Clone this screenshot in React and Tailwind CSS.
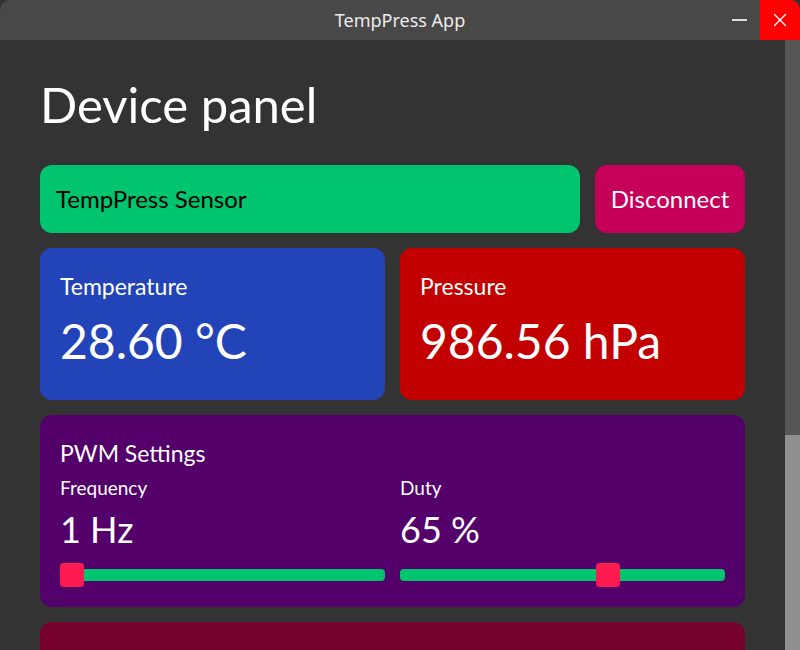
import { X } from 'lucide-react';

const FONT = "font-['Lato','Noto_Sans',sans-serif]";

function Slider({ percent }) {
  // track with a square-ish thumb; thumb travels across the inner width
  return (
    <div className="relative mt-[14px] h-6">
      <div className="absolute inset-x-0 top-[6px] h-[12px] rounded-[4px] bg-[#00c46e]" />
      <div
        className="absolute top-0 h-6 w-6 rounded-[4px] bg-[#ff1a50]"
        style={{ left: `calc((100% - 24px) * ${percent / 100})` }}
      />
    </div>
  );
}

function Field({ label, value, percent }) {
  return (
    <div className="flex flex-col">
      <span className="text-[19px] leading-[24px] text-white">{label}</span>
      <span className="mt-[9px] text-[36px] leading-[40px] text-white">{value}</span>
      <Slider percent={percent} />
    </div>
  );
}

export default function App() {
  return (
    <div className={`flex h-[650px] w-[800px] flex-col overflow-hidden bg-[#333333] ${FONT}`}>
      <div className="flex h-10 shrink-0 items-center rounded-t-[10px] bg-[#484848]">
        <div className="flex-1" />
        <span className="font-['Noto_Sans',sans-serif] text-[18px] text-[#ececec]">
          TempPress App
        </span>
        <div className="flex flex-1 items-center justify-end">
          <div className="mr-[13px] h-[1.5px] w-[15px] bg-[#dcdcdc]" />
          <div className="flex h-10 w-10 items-center justify-center rounded-tr-[10px] bg-[#ff0000]">
            <X className="h-[22px] w-[22px] text-white" strokeWidth={1.5} />
          </div>
        </div>
      </div>

      <div className="flex min-h-0 flex-1">
        <div className="flex-1 px-10">
          <h1 className="mt-[36px] text-[49px] leading-[56px] text-white">Device panel</h1>

          <div className="mt-[33px] flex gap-[15px]">
            <div className="flex h-[68px] flex-1 items-center rounded-xl bg-[#00c46e] px-4 text-[24px] text-black">
              TempPress Sensor
            </div>
            <div className="flex h-[68px] w-[150px] items-center justify-center rounded-xl bg-[#c6005a] text-[24px] text-white">
              Disconnect
            </div>
          </div>

          <div className="mt-[15px] grid grid-cols-2 gap-[15px]">
            <div className="h-[152px] rounded-xl bg-[#2244b8] px-5 pt-[24px] text-white">
              <div className="text-[23px] leading-[28px]">Temperature</div>
              <div className="mt-[14px] text-[48px] leading-[54px]">28.60 °C</div>
            </div>
            <div className="h-[152px] rounded-xl bg-[#c20000] px-5 pt-[24px] text-white">
              <div className="text-[23px] leading-[28px]">Pressure</div>
              <div className="mt-[14px] text-[48px] leading-[54px]">986.56 hPa</div>
            </div>
          </div>

          <div className="mt-[15px] h-[192px] rounded-xl bg-[#53006b] px-5 pt-[24px]">
            <div className="text-[23px] leading-[28px] text-white">PWM Settings</div>
            <div className="mt-[9px] grid grid-cols-2 gap-[15px]">
              <Field label="Frequency" value="1 Hz" percent={0} />
              <Field label="Duty" value="65 %" percent={65} />
            </div>
          </div>

          <div className="mt-[15px] h-[100px] rounded-xl bg-[#76002e]" />
        </div>

        <div className="flex w-[15px] shrink-0 flex-col bg-[#555555]">
          <div className="flex-1" />
          <div className="h-[215px] bg-[#8f8f8f]" />
        </div>
      </div>
    </div>
  );
}
